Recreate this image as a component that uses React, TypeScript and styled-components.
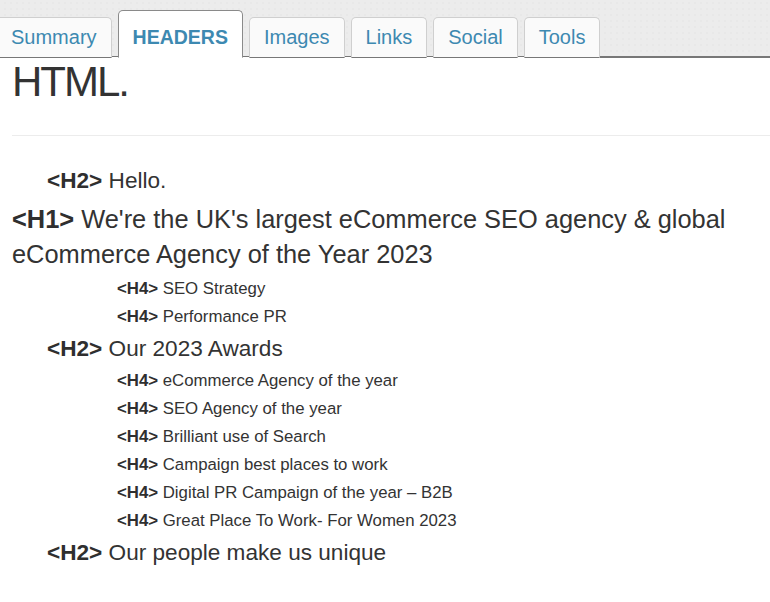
import { FunctionComponent } from 'react';
import styled, { createGlobalStyle } from 'styled-components';

const GlobalStyle = createGlobalStyle`
  body {
    margin: 0;
    background: #fff;
    font-family: 'Liberation Sans', Arial, sans-serif;
    color: #333;
  }
`;

type Level = 1 | 2 | 4;

interface HeadingItem {
  level: Level;
  text: string;
}

const tabs = ['Summary', 'HEADERS', 'Images', 'Links', 'Social', 'Tools'];

const headings: HeadingItem[] = [
  { level: 2, text: 'Hello.' },
  { level: 1, text: "We're the UK's largest eCommerce SEO agency & global eCommerce Agency of the Year 2023" },
  { level: 4, text: 'SEO Strategy' },
  { level: 4, text: 'Performance PR' },
  { level: 2, text: 'Our 2023 Awards' },
  { level: 4, text: 'eCommerce Agency of the year' },
  { level: 4, text: 'SEO Agency of the year' },
  { level: 4, text: 'Brilliant use of Search' },
  { level: 4, text: 'Campaign best places to work' },
  { level: 4, text: 'Digital PR Campaign of the year – B2B' },
  { level: 4, text: 'Great Place To Work- For Women 2023' },
  { level: 2, text: 'Our people make us unique' },
];

const App: FunctionComponent = () => {
  return (
    <Page>
      <GlobalStyle />
      <TabBar>
        {tabs.map((t) => (
          <Tab key={t} $active={t === 'HEADERS'}>
            {t}
          </Tab>
        ))}
        <TabFiller />
      </TabBar>
      <Content>
        <Title>HTML.</Title>
        <Rule />
        <HeadingList>
          {headings.map((h, i) => (
            <HeadingRow key={i} $level={h.level}>
              <Tag>{`<H${h.level}>`}</Tag>
              {` ${h.text}`}
            </HeadingRow>
          ))}
        </HeadingList>
      </Content>
    </Page>
  );
};

export default App;

const Page = styled.div`
  width: 770px;
  min-height: 602px;
  overflow: hidden;
`;

const TabBar = styled.div`
  display: flex;
  align-items: flex-end;
  gap: 6px;
  height: 57px;
  margin-left: -4px;
  background-color: #ececec;
  background-image: radial-gradient(#e2e2e2 0.6px, transparent 0.8px);
  background-size: 6px 6px;
`;

const Tab = styled.div<{ $active: boolean }>`
  box-sizing: border-box;
  height: ${(p) => (p.$active ? '48px' : '41px')};
  padding: ${(p) => (p.$active ? '13px 14px 0' : '6px 14px 0')};
  border: 1px solid ${(p) => (p.$active ? '#8a8a8a' : '#cfcfcf')};
  border-bottom: ${(p) => (p.$active ? '1px solid #fff' : '1px solid #777')};
  border-radius: 5px 5px 0 0;
  background: ${(p) => (p.$active ? '#fff' : '#fafafa')};
  color: #3d89b1;
  font-size: ${(p) => (p.$active ? '19.5px' : '20px')};
  font-weight: ${(p) => (p.$active ? 700 : 400)};
  line-height: 26px;
  margin-bottom: -1px;
  position: relative;
  z-index: 1;
  white-space: nowrap;
`;

const TabFiller = styled.div`
  flex: 1;
  align-self: stretch;
  border-bottom: 1px solid #777;
  margin-bottom: -1px;
  margin-left: -6px;
`;

const Content = styled.div`
  border-top: 1px solid #777;
  margin-top: -1px;
  padding: 0 0 0 12px;
`;

const Title = styled.h1`
  margin: 0;
  font-size: 42px;
  font-weight: 400;
  letter-spacing: -2px;
  line-height: 50px;
  color: #333;
`;

const Rule = styled.hr`
  margin: 28px 0 0;
  border: 0;
  border-top: 1px solid #ececec;
`;

const HeadingList = styled.div`
  padding-top: 27px;
`;

const HeadingRow = styled.div<{ $level: Level }>`
  padding-left: ${(p) => (p.$level === 1 ? 0 : p.$level === 2 ? 35 : 105)}px;
  padding-right: ${(p) => (p.$level === 1 ? 30 : 0)}px;
  font-size: ${(p) => (p.$level === 1 ? 25.4 : p.$level === 2 ? 22.6 : 16.8)}px;
  line-height: ${(p) => (p.$level === 1 ? 35 : p.$level === 2 ? 36 : 28)}px;
  margin: ${(p) => (p.$level === 1 ? '3px 0 3px' : '0')};
  color: #333;
`;

const Tag = styled.b`
  font-weight: 700;
  color: #2f2f2f;
`;
